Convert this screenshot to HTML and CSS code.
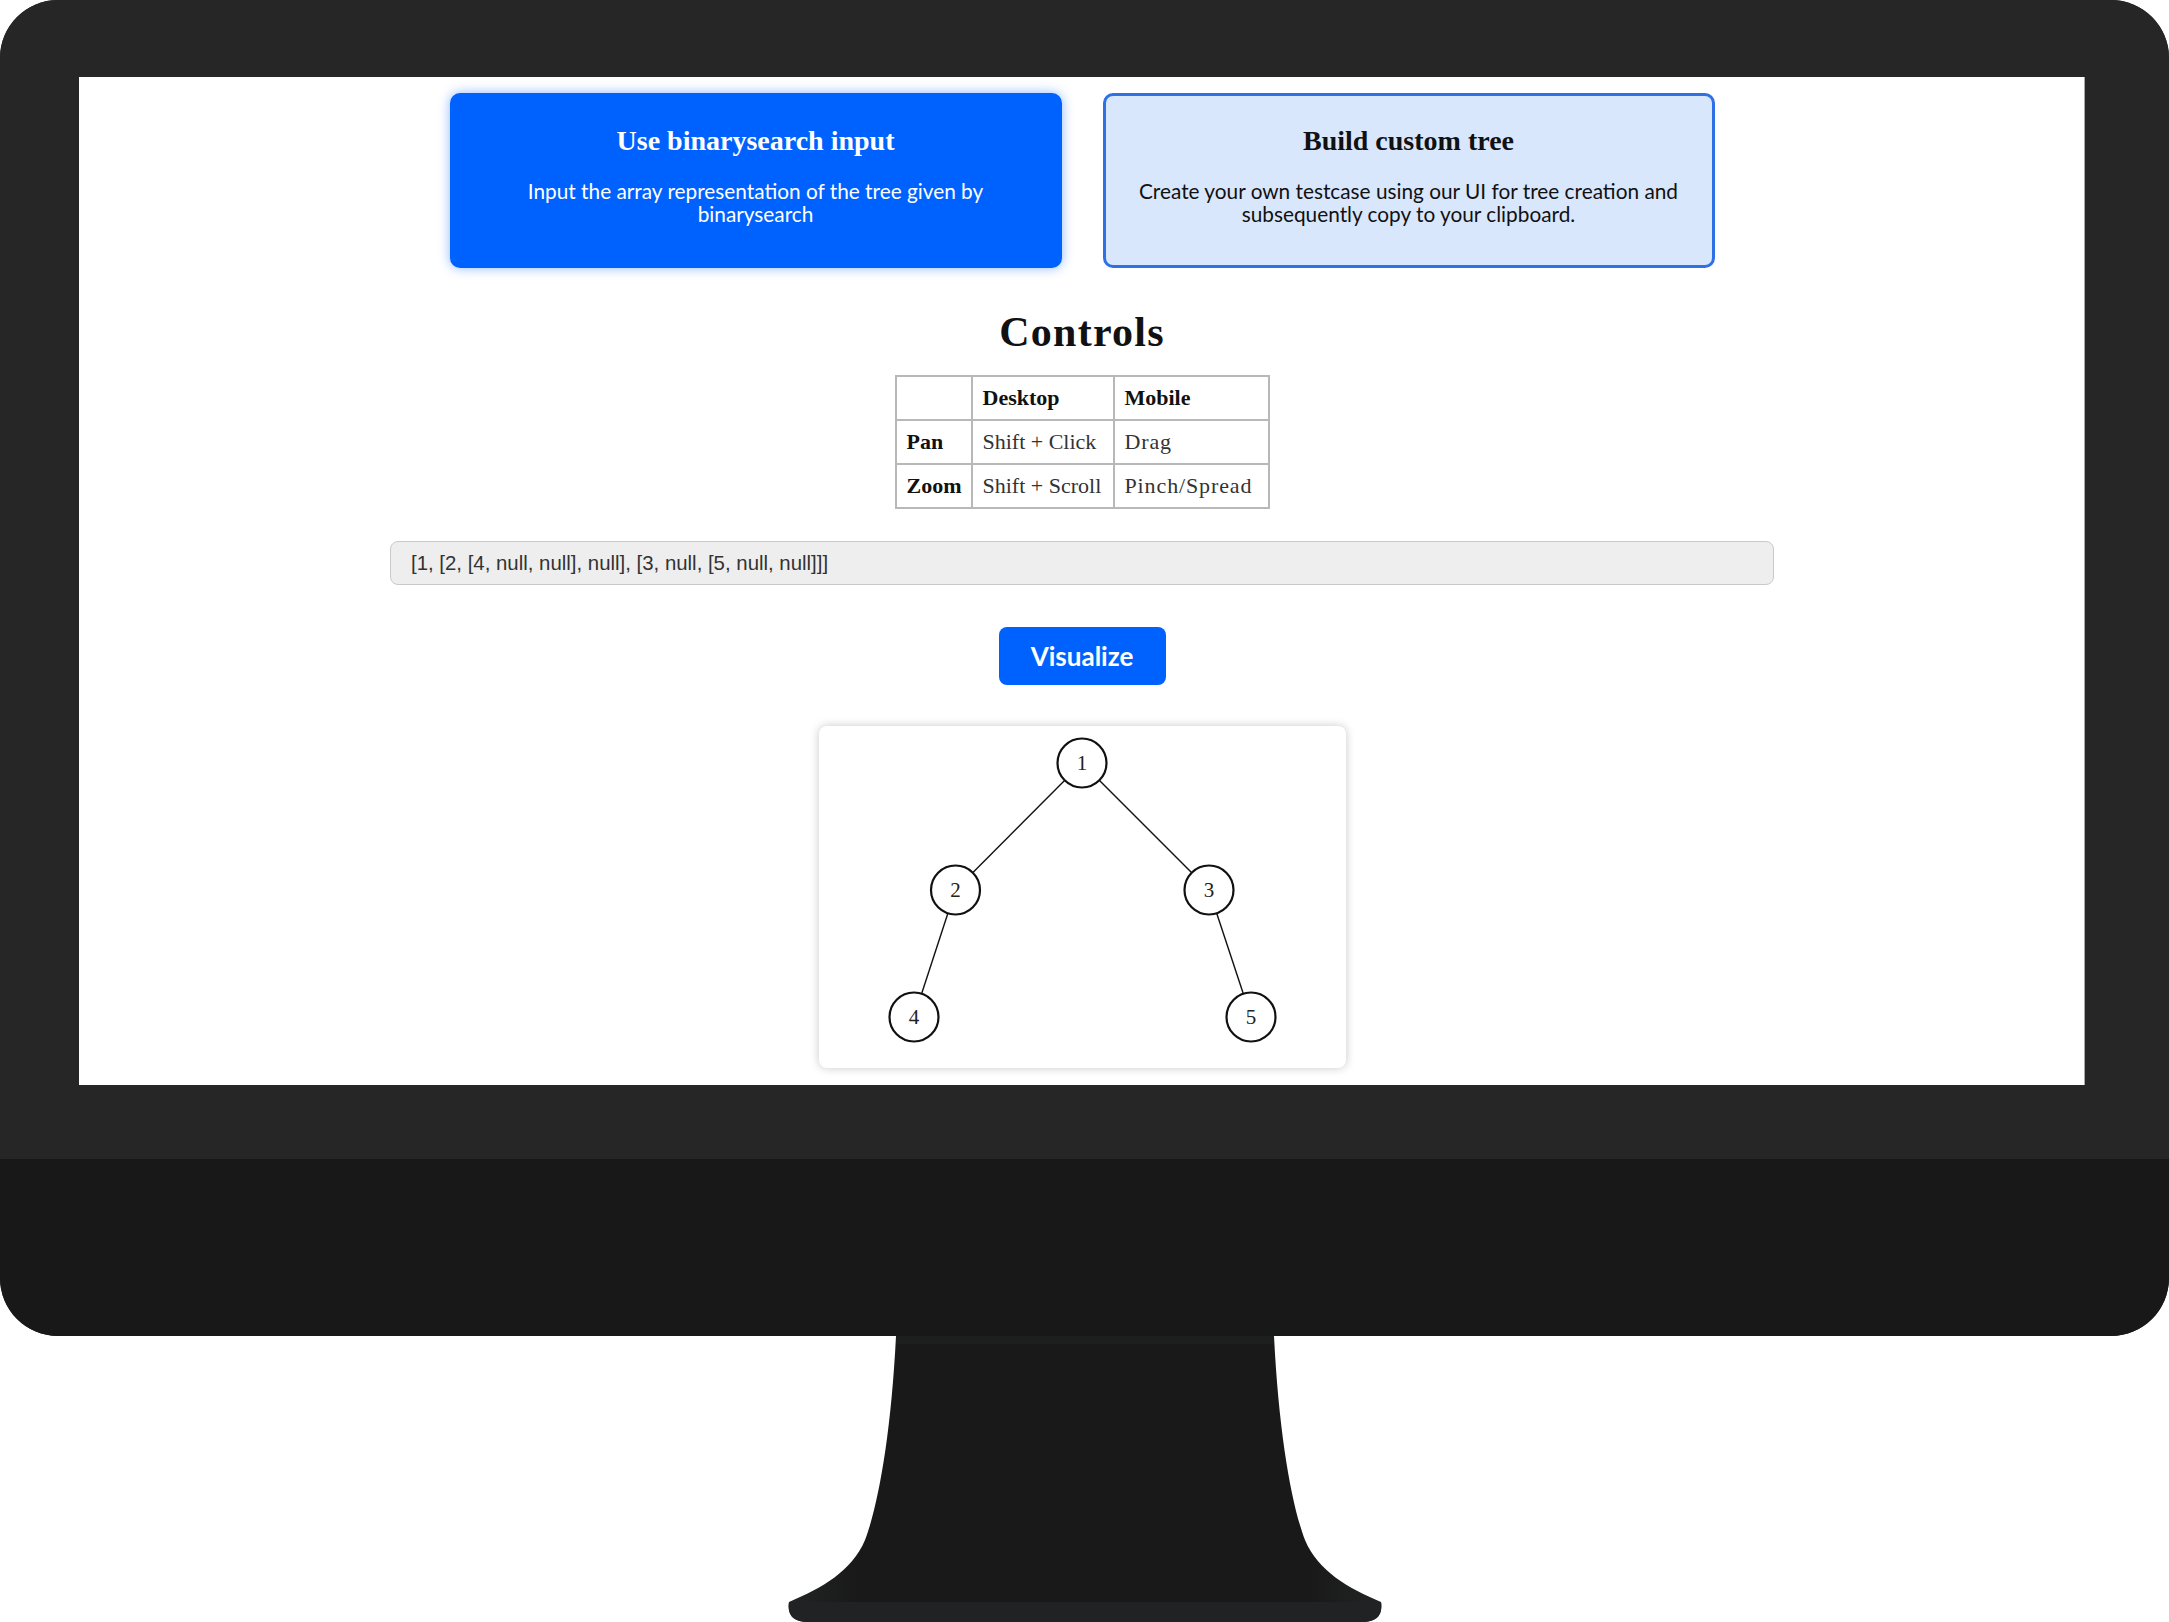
FILE: index.html
```html
<!DOCTYPE html>
<html lang="en">
<head>
<meta charset="utf-8">
<title>Binary Tree Visualizer</title>
<link rel="stylesheet" href="styles.css">
</head>
<body>
<div class="monitor">
  <div class="display">
    <div class="bezel">
      <main class="screen">
        <section class="modes">
          <div class="mode-card mode-active">
            <h2 class="mode-title">Use binarysearch input</h2>
            <p class="mode-desc">Input the array representation of the tree given by binarysearch</p>
          </div>
          <div class="mode-card mode-idle">
            <h2 class="mode-title">Build custom tree</h2>
            <p class="mode-desc">Create your own testcase using our UI for tree creation and subsequently copy to your clipboard.</p>
          </div>
        </section>

        <h1 class="controls-title">Controls</h1>
        <table class="controls">
          <colgroup>
            <col class="c1"><col class="c2"><col class="c3">
          </colgroup>
          <tr><th></th><th>Desktop</th><th>Mobile</th></tr>
          <tr><th>Pan</th><td>Shift + Click</td><td>Drag</td></tr>
          <tr><th>Zoom</th><td>Shift + Scroll</td><td>Pinch/Spread</td></tr>
        </table>

        <input class="tree-input" type="text" value="[1, [2, [4, null, null], null], [3, null, [5, null, null]]]">

        <button class="visualize" type="button">Visualize</button>

        <div class="tree-box">
          <svg class="tree" width="527" height="342" viewBox="0 0 527 342">
            <g class="edges">
              <line x1="263" y1="37" x2="136.5" y2="164"/>
              <line x1="263" y1="37" x2="390" y2="164"/>
              <line x1="136.5" y1="164" x2="95" y2="291"/>
              <line x1="390" y1="164" x2="432" y2="291"/>
            </g>
            <g class="nodes">
              <circle cx="263" cy="37" r="24.5"/>
              <circle cx="136.5" cy="164" r="24.5"/>
              <circle cx="390" cy="164" r="24.5"/>
              <circle cx="95" cy="291" r="24.5"/>
              <circle cx="432" cy="291" r="24.5"/>
            </g>
            <g class="labels">
              <text x="263" y="44">1</text>
              <text x="136.5" y="171">2</text>
              <text x="390" y="171">3</text>
              <text x="95" y="298">4</text>
              <text x="432" y="298">5</text>
            </g>
          </svg>
        </div>
      </main>
    </div>
    <div class="chin"></div>
  </div>
  <div class="stand">
    <svg width="594" height="286" viewBox="0 0 594 286">
      <defs>
        <linearGradient id="standShade" x1="0" y1="0" x2="1" y2="0">
          <stop offset="0" stop-color="#232425"/>
          <stop offset="0.12" stop-color="#191919"/>
          <stop offset="0.88" stop-color="#191919"/>
          <stop offset="1" stop-color="#232425"/>
        </linearGradient>
      </defs>
      <path class="stand-body" d="M108,0 H486 C491,100 504,170 517,204 C530,235 560,252 593,266 Q596,286 574,286 H20 Q-2,286 1,266 C34,252 64,235 77,204 C90,170 103,100 108,0 Z"/>
      <rect class="stand-top" x="108" y="0" width="378" height="8"/>
      <path class="stand-foot" d="M1,266 H593 Q596,286 574,286 H20 Q-2,286 1,266 Z"/>
    </svg>
  </div>
</div>
</body>
</html>
```

FILE: styles.css
```css
* { box-sizing: border-box; }

html, body {
  margin: 0;
  padding: 0;
  background: #ffffff;
}

body {
  width: 2169px;
  height: 1622px;
  overflow: hidden;
}

.monitor {
  width: 2169px;
  display: flex;
  flex-direction: column;
}

.display {
  border-radius: 58px;
  overflow: hidden;
  background: #262626;
}

.bezel {
  background: #262626;
  padding: 77px 84px 74px 79px;
}

.screen {
  width: 2006px;
  height: 1008px;
  background: #ffffff;
  overflow: hidden;
  display: flex;
  flex-direction: column;
  align-items: center;
  padding-top: 16px;
  box-shadow: inset -1px 0 0 #a9a9a9;
}

.chin {
  height: 177px;
  background: #181818;
}

.stand {
  display: flex;
  justify-content: center;
  height: 286px;
  padding-left: 1px;
}

.stand-body { fill: url(#standShade); }
.stand-top { fill: #222324; opacity: 0.5; }
.stand-foot { fill: #212223; }

/* mode cards */
.modes {
  display: flex;
  gap: 41px;
}

.mode-card {
  width: 612px;
  height: 175px;
  border-radius: 10px;
  padding: 30px 28px 0;
  text-align: center;
}

.mode-active {
  background: #0062fe;
  color: #ffffff;
  box-shadow: 0 0 12px rgba(0, 98, 254, 0.45);
}

.mode-idle {
  background: #d9e7fd;
  border: 3px solid #2f70e4;
  color: #111111;
  padding-top: 27px;
}

.mode-title {
  margin: 0;
  font-family: "Liberation Serif", "Times New Roman", serif;
  font-weight: 700;
  font-size: 28px;
  line-height: 35px;
}

.mode-desc {
  margin: 21px 0 0;
  font-family: Lato, "Open Sans", sans-serif;
  font-size: 20.8px;
  line-height: 23px;
}

/* controls */
.controls-title {
  margin: 39px 0 0;
  font-family: "Liberation Serif", "Times New Roman", serif;
  font-weight: 700;
  font-size: 42px;
  line-height: 50px;
  letter-spacing: 0.03em;
  color: #111111;
}

.controls {
  margin-top: 18px;
  border-collapse: collapse;
  table-layout: fixed;
  width: 373px;
  font-family: "Liberation Serif", "Times New Roman", serif;
  font-size: 22px;
}

.c1 { width: 76px; }
.c2 { width: 142px; }
.c3 { width: 155px; }

.controls th,
.controls td {
  border: 2px solid #b8b8b8;
  height: 44px;
  padding: 0 10px;
  text-align: left;
  white-space: nowrap;
}

.controls th {
  font-weight: 700;
  color: #111111;
}

.controls td {
  font-weight: 400;
  color: #333333;
}

.controls td:last-child {
  letter-spacing: 0.04em;
}

/* input + button */
.tree-input {
  margin-top: 32px;
  width: 1384px;
  height: 44px;
  padding: 0 20px;
  border: 1px solid #c9c9c9;
  border-radius: 8px;
  background: #eeeeee;
  font-family: "Liberation Sans", Arial, sans-serif;
  font-size: 20.4px;
  color: #333333;
  outline: none;
}

.visualize {
  margin-top: 42px;
  width: 167px;
  height: 58px;
  border: none;
  border-radius: 8px;
  background: #0062fe;
  color: #ffffff;
  font-family: Lato, "Open Sans", sans-serif;
  font-weight: 700;
  font-size: 26px;
  cursor: pointer;
}

/* tree */
.tree-box {
  margin-top: 41px;
  width: 527px;
  height: 342px;
  background: #ffffff;
  border-radius: 8px;
  box-shadow: 0 0 10px rgba(0, 0, 0, 0.22);
}

.tree { display: block; }

.edges line {
  stroke: #111111;
  stroke-width: 1.4;
}

.nodes circle {
  fill: #ffffff;
  stroke: #111111;
  stroke-width: 2.2;
}

.labels text {
  font-family: "Liberation Serif", "Times New Roman", serif;
  font-size: 21px;
  fill: #222222;
  text-anchor: middle;
}
```
